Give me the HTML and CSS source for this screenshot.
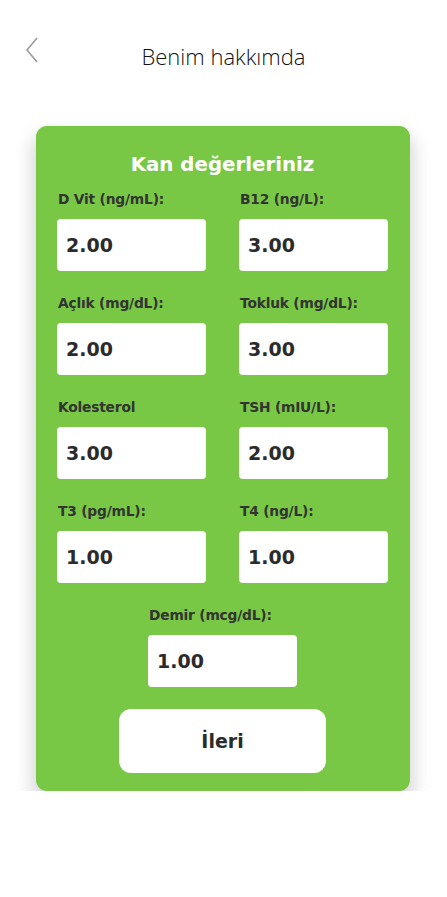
FILE: index.html
```html
<!DOCTYPE html>
<html lang="tr">
<head>
<meta charset="utf-8">
<link rel="stylesheet" href="styles.css">
</head>
<body>
<header class="topbar">
  <svg class="back" width="14" height="26" viewBox="0 0 14 26"><path d="M12 1 L2 13 L12 25" fill="none" stroke="#9a9a9a" stroke-width="1.6"/></svg>
  <h1 class="title">Benim hakkımda</h1>
</header>
<main class="card">
  <h2 class="card-title">Kan değerleriniz</h2>
  <div class="grid">
    <div class="field"><label>D Vit (ng/mL):</label><div class="input">2.00</div></div>
    <div class="field"><label>B12 (ng/L):</label><div class="input">3.00</div></div>
    <div class="field"><label>Açlık (mg/dL):</label><div class="input">2.00</div></div>
    <div class="field"><label>Tokluk (mg/dL):</label><div class="input">3.00</div></div>
    <div class="field"><label>Kolesterol</label><div class="input">3.00</div></div>
    <div class="field"><label>TSH (mIU/L):</label><div class="input">2.00</div></div>
    <div class="field"><label>T3 (pg/mL):</label><div class="input">1.00</div></div>
    <div class="field"><label>T4 (ng/L):</label><div class="input">1.00</div></div>
  </div>
  <div class="field center"><label>Demir (mcg/dL):</label><div class="input">1.00</div></div>
  <button class="next">İleri</button>
</main>
</body>
</html>
```
FILE: styles.css
```css
* { box-sizing: border-box; }
body {
  margin: 0;
  background: #fff;
  font-family: "DejaVu Sans", sans-serif;
}
.topbar {
  position: relative;
  height: 112px;
  display: flex;
  justify-content: center;
  padding-top: 42px;
}
.back {
  position: absolute;
  left: 25px;
  top: 37px;
}
.title {
  margin: 0;
  font-family: "Open Sans", sans-serif;
  font-weight: 300;
  font-size: 22px;
  color: #111;
  line-height: 28px;
}
.card {
  margin: 14px 37px 0 36px;
  background: #78c846;
  border-radius: 11px;
  box-shadow: 0 12px 18px 4px rgba(0,0,0,0.16);
  padding: 24px 22px 18px 21px;
  display: flex;
  flex-direction: column;
  align-items: center;
}
.card-title {
  margin: 0;
  color: #fff;
  font-size: 19.8px;
  font-weight: 700;
  line-height: 30px;
}
.grid {
  display: grid;
  grid-template-columns: 149px 149px;
  column-gap: 33px;
  row-gap: 23px;
  width: 100%;
  margin-top: 10px;
}
.field {
  display: flex;
  flex-direction: column;
}
.field label {
  color: #333;
  font-size: 13.8px;
  font-weight: 700;
  line-height: 18px;
  letter-spacing: -0.2px;
  padding-left: 1px;
  margin-bottom: 11px;
}
.input {
  width: 149px;
  height: 52px;
  background: #fff;
  border-radius: 4px;
  padding-left: 9px;
  display: flex;
  align-items: center;
  font-size: 19px;
  font-weight: 700;
  color: #2b2b2b;
}
.center {
  margin-top: 23px;
}
.next {
  margin-top: 22px;
  width: 207px;
  height: 64px;
  border: none;
  border-radius: 12px;
  background: #fff;
  font-family: inherit;
  font-size: 19px;
  font-weight: 700;
  color: #2b2b2b;
}
```
